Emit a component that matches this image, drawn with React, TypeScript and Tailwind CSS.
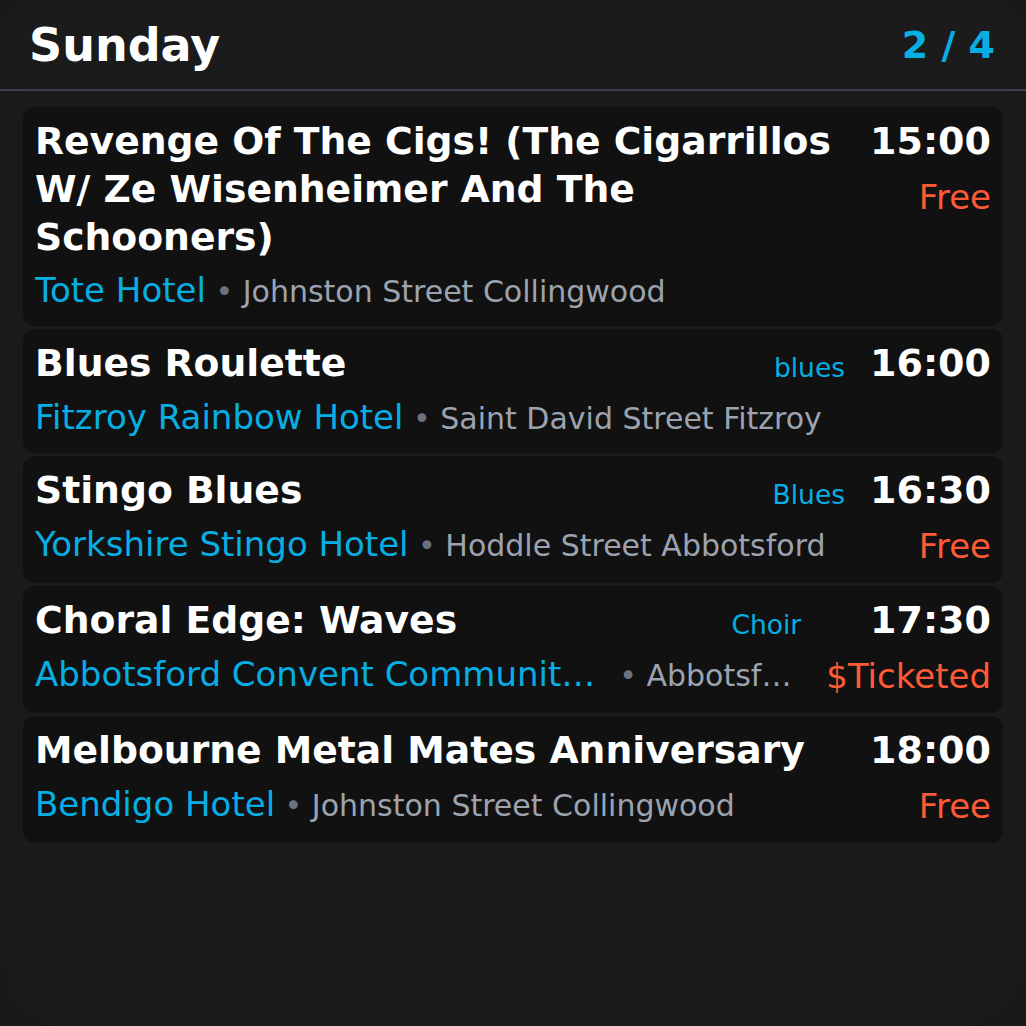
import React from 'react';

interface Gig {
  title: string;
  venue: string;
  address: string;
  time: string;
  tag?: string;
  price?: string;
}

const gigs: Gig[] = [
  {
    title: 'Revenge Of The Cigs! (The Cigarrillos W/ Ze Wisenheimer And The Schooners)',
    venue: 'Tote Hotel',
    address: 'Johnston Street Collingwood',
    time: '15:00',
    price: 'Free',
  },
  {
    title: 'Blues Roulette',
    venue: 'Fitzroy Rainbow Hotel',
    address: 'Saint David Street Fitzroy',
    time: '16:00',
    tag: 'blues',
  },
  {
    title: 'Stingo Blues',
    venue: 'Yorkshire Stingo Hotel',
    address: 'Hoddle Street Abbotsford',
    time: '16:30',
    tag: 'Blues',
    price: 'Free',
  },
  {
    title: 'Choral Edge: Waves',
    venue: 'Abbotsford Convent Community Hall',
    address: 'Abbotsford Street Abbotsford',
    time: '17:30',
    tag: 'Choir',
    price: '$Ticketed',
  },
  {
    title: 'Melbourne Metal Mates Anniversary',
    venue: 'Bendigo Hotel',
    address: 'Johnston Street Collingwood',
    time: '18:00',
    price: 'Free',
  },
];

const GigCard = ({ gig }: { gig: Gig }) => (
  <div className="flex gap-[25px] rounded-xl bg-[#111111] px-3 py-[11px]">
    {/* Left: title + venue */}
    <div className="flex min-w-0 flex-1 flex-col">
      <div className="flex items-start justify-between gap-[25px]">
        <h2 className="text-[37.7px] font-bold leading-[47.8px] text-white">{gig.title}</h2>
        {gig.tag && (
          <span className="mt-2 shrink-0 text-[26.5px] leading-[39px] text-[#06aee3]">{gig.tag}</span>
        )}
      </div>
      <div className="mt-1 flex h-[50px] min-w-0 items-baseline">
        <span className="max-w-[75%] shrink-0 truncate text-[34px] leading-[50px] text-[#06aee3]">
          {gig.venue}
        </span>
        <span className="min-w-0 truncate whitespace-pre text-[30px] leading-[40px] text-[#9ca3af]">
          <span className="text-[#6b7280]"> • </span>
          {gig.address}
        </span>
      </div>
    </div>

    {/* Right: time + price */}
    <div className="flex shrink-0 flex-col items-end">
      <span className="text-[38px] font-bold leading-[47.8px] text-white">{gig.time}</span>
      {gig.price && (
        <span className="mt-[6px] text-[34px] leading-[51px] text-[#ff5a36]">{gig.price}</span>
      )}
    </div>
  </div>
);

export default function App() {
  return (
    <div className="h-[1026px] w-[1026px] bg-[#181818]" style={{ fontFamily: '"DejaVu Sans", sans-serif' }}>
      <div className="flex h-full flex-col rounded-b-[56px] bg-[#1b1b1b] shadow-[inset_0_0_24px_rgba(0,0,0,0.15)]">
        {/* Header */}
        <div className="flex h-[91px] shrink-0 items-center justify-between border-b-2 border-[#3a3f4a] pl-[29px] pr-[31px]">
          <h1 className="text-[46px] font-bold leading-none text-white">Sunday</h1>
          <span className="text-[38px] font-bold leading-none text-[#06aee3]">2 / 4</span>
        </div>

        {/* Gig list */}
        <div className="flex flex-col gap-[3px] px-[23px] pt-4">
          {gigs.map((gig) => (
            <GigCard key={gig.title} gig={gig} />
          ))}
        </div>
      </div>
    </div>
  );
}
